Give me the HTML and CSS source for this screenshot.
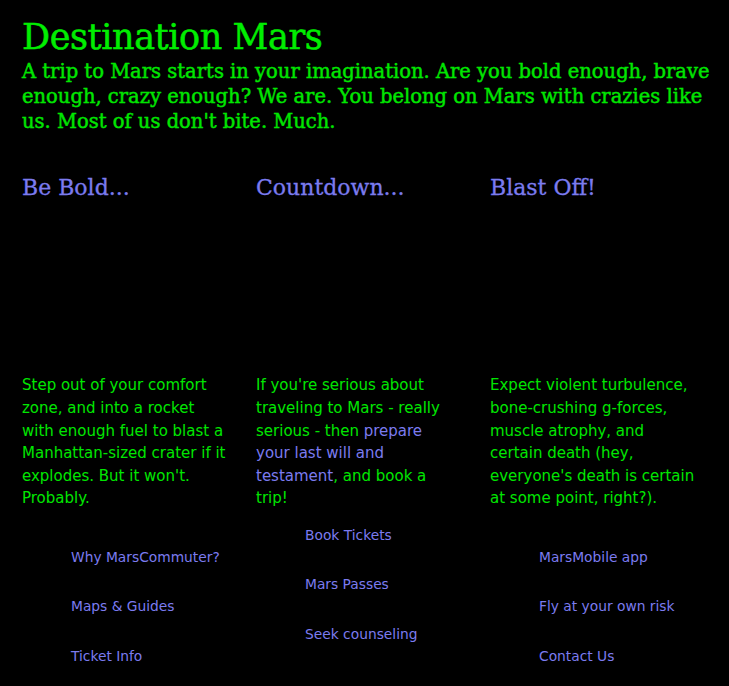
FILE: index.html
```html
<!DOCTYPE html>
<html lang="en">
<head>
<meta charset="utf-8">
<title>Destination Mars</title>
<link rel="stylesheet" href="styles.css">
</head>
<body>
<header class="hero">
  <h1 class="title">Destination Mars</h1>
  <p class="lead">A trip to Mars starts in your imagination. Are you bold enough, brave enough, crazy enough? We are. You belong on Mars with crazies like us. Most of us don't bite. Much.</p>
</header>
<main class="features">
  <section class="feature">
    <h3 class="feature-title">Be Bold...</h3>
    <div class="feature-img"></div>
    <p class="feature-text">Step out of your comfort zone, and into a rocket with enough fuel to blast a Manhattan-sized crater if it explodes. But it won't. Probably.</p>
  </section>
  <section class="feature feature-narrow">
    <h3 class="feature-title">Countdown...</h3>
    <div class="feature-img"></div>
    <p class="feature-text">If you're serious about traveling to Mars - really serious - then <a class="inline-link" href="#">prepare your last will and testament</a>, and book a trip!</p>
  </section>
  <section class="feature">
    <h3 class="feature-title">Blast Off!</h3>
    <div class="feature-img"></div>
    <p class="feature-text">Expect violent turbulence, bone-crushing g-forces, muscle atrophy, and certain death (hey, everyone's death is certain at some point, right?).</p>
  </section>
</main>
<footer class="footer">
  <ul class="links">
    <li><a href="#">Why MarsCommuter?</a></li>
    <li><a href="#">Maps &amp; Guides</a></li>
    <li><a href="#">Ticket Info</a></li>
  </ul>
  <ul class="links links-mid">
    <li><a href="#">Book Tickets</a></li>
    <li><a href="#">Mars Passes</a></li>
    <li><a href="#">Seek counseling</a></li>
  </ul>
  <ul class="links">
    <li><a href="#">MarsMobile app</a></li>
    <li><a href="#">Fly at your own risk</a></li>
    <li><a href="#">Contact Us</a></li>
  </ul>
</footer>
</body>
</html>
```
FILE: styles.css
```css
html, body {
  margin: 0;
  padding: 0;
  background: #000;
}
body {
  color: #00e600;
  font-family: "DejaVu Sans", Verdana, sans-serif;
  font-size: 15px;
  line-height: 22.6px;
  overflow: hidden;
}
.hero {
  padding: 16px 10px 0 22px;
}
.title {
  margin: 0;
  font-family: "DejaVu Serif", serif;
  font-weight: normal;
  font-size: 35px;
  letter-spacing: -0.4px;
  line-height: 42px;
  color: #00ee00;
  -webkit-text-stroke: 0.5px currentColor;
}
.lead {
  margin: 2px 0 0;
  font-family: "DejaVu Serif", serif;
  font-size: 19.5px;
  line-height: 24.8px;
  color: #00e600;
  -webkit-text-stroke: 0.45px currentColor;
}
.features {
  display: grid;
  grid-template-columns: 234px 234px 234px;
  padding: 39px 0 0 22px;
}
.feature {
  padding-right: 29.4px;
}
.feature-narrow {
  padding-right: 29.8px;
}
.feature-title {
  margin: 0;
  font-family: "DejaVu Serif", serif;
  font-weight: normal;
  font-size: 22px;
  line-height: 30px;
  color: #7b7bef;
  -webkit-text-stroke: 0.3px currentColor;
}
.feature-img {
  height: 171px;
}
.feature-text {
  margin: 0;
}
.inline-link {
  color: #7b7bef;
  text-decoration: none;
}
.footer {
  display: grid;
  grid-template-columns: 234px 234px 234px;
  padding: 0 0 0 22px;
}
.links {
  list-style: none;
  margin: 0;
  padding: 37px 0 0 49px;
  font-size: 13.8px;
  line-height: 20px;
}
.links li {
  margin-bottom: 29.3px;
}
.links a {
  color: #7b7bef;
  text-decoration: none;
}
.links-mid {
  padding-top: 15px;
}
```
